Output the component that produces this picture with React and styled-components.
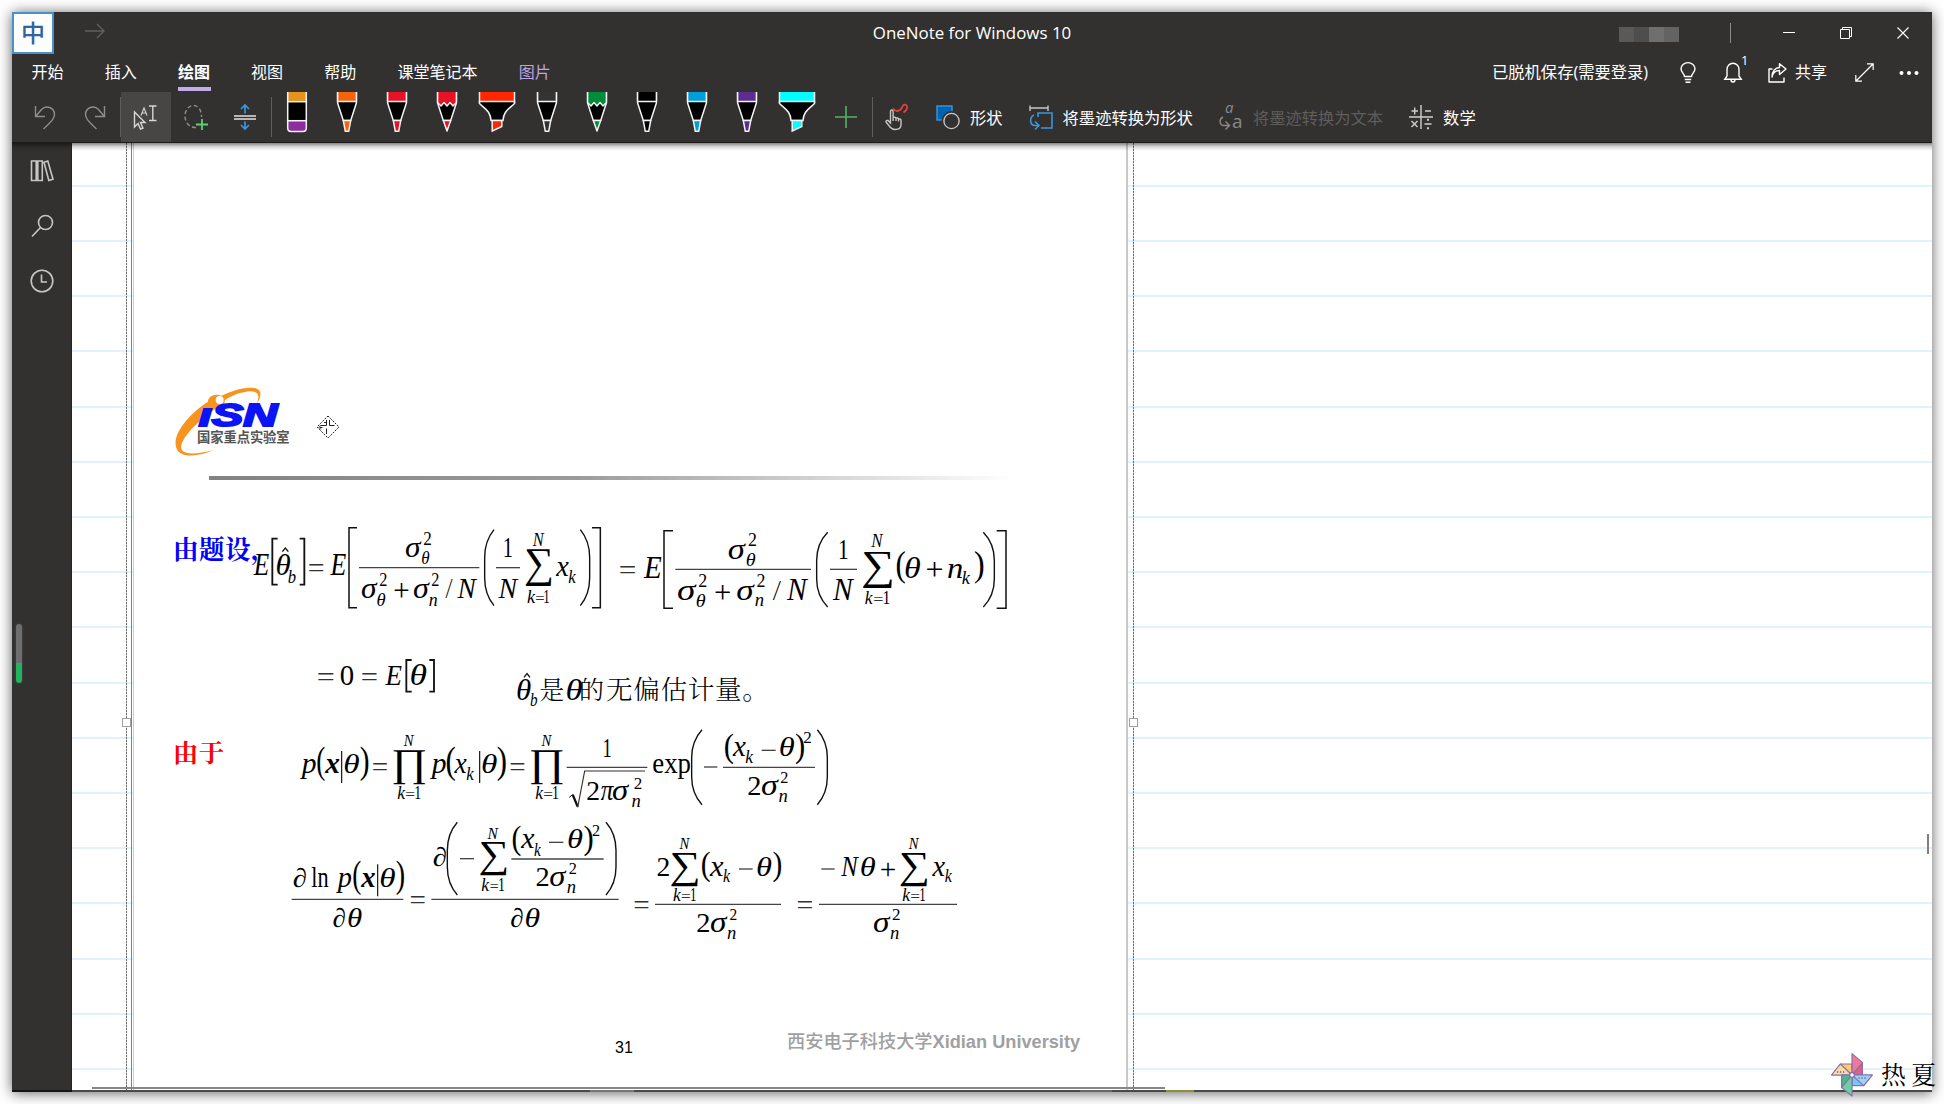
import React from "react";
import styled, { createGlobalStyle, css } from "styled-components";

const Global = createGlobalStyle`
  * { box-sizing: border-box; }
  html, body { margin: 0; padding: 0; background: #fff; overflow: hidden; }
  body { font-family: "Open Sans", "Noto Sans CJK SC", sans-serif; }
  svg { display: block; overflow: visible; }
`;

const Desktop = styled.main`
  width: 1944px;
  height: 1104px;
  padding: 12px;
  position: relative;
  background: #fff;
`;
const Window = styled.div`
  width: 1920px;
  height: 1080px;
  display: flex;
  flex-direction: column;
  background: #fff;
  box-shadow: 0 1px 13px rgba(0, 0, 0, 0.62);
`;

/* ---------- header ---------- */
const Header = styled.header`
  height: 131px;
  flex: none;
  display: flex;
  flex-direction: column;
  background: #323130;
  color: #fff;
  border-bottom: 1px solid #1c1b1a;
  position: relative;
  z-index: 2;
`;
const TitleBar = styled.div`
  height: 42px;
  display: grid;
  grid-template-columns: 1fr auto 1fr;
  align-items: center;
`;
const TitleLeft = styled.div`
  display: flex;
  align-items: center;
  gap: 31px;
`;
const ImeBadge = styled.div`
  width: 42px;
  height: 42px;
  border: 2px solid #4b8fcc;
  background: #fdfdfd;
  color: #2f659c;
  font: 500 24px/36px "Noto Sans CJK SC", sans-serif;
  text-align: center;
`;
const Title = styled.h1`
  margin: 0;
  font-weight: 400;
  font-size: 16.9px;
  line-height: 24px;
  white-space: nowrap;
`;
const TitleRight = styled.div`
  display: flex;
  justify-content: flex-end;
  align-items: center;
  height: 42px;
`;
const Mosaic = styled.div`
  display: flex;
  width: 60px;
  height: 15px;
  margin: 3px 51px 0 0;
`;
const Tile = styled.span`
  flex: 1;
  background: ${(p) => p.$tone};
`;
const TitleRule = styled.span`
  width: 1px;
  height: 20px;
  background: #8b8a89;
`;
const CaptionButton = styled.span`
  width: 57px;
  height: 40px;
  display: flex;
  align-items: center;
  justify-content: center;
`;
const CaptionGroup = styled.div`
  display: flex;
  padding: 0 1px 0 29px;
`;

const TabRow = styled.nav`
  height: 38px;
  display: flex;
  justify-content: space-between;
  padding: 0 13px 0 19.5px;
  font-size: 16px;
  line-height: 37px;
`;
const Tabs = styled.div`
  display: flex;
  gap: 41.2px;
`;
const Tab = styled.span`
  position: relative;
  height: 38px;
  white-space: nowrap;
  color: ${(p) => (p.$accent ? "#bea3e6" : "#fff")};
  ${(p) =>
    p.$active &&
    css`
      font-weight: 700;
      &::after {
        content: "";
        position: absolute;
        left: 0;
        right: -1px;
        top: 33px;
        height: 4px;
        background: #c3abe9;
      }
    `}
`;
const Status = styled.div`
  display: flex;
  align-items: center;
  height: 37px;
`;
const SyncText = styled.span`
  font-size: 16.3px;
  width: 157px;
  white-space: nowrap;
`;
const IconSlot = styled.span`
  display: flex;
  margin-left: ${(p) => p.$ml}px;
  position: relative;
`;
const Count = styled.sup`
  position: absolute;
  left: 17px;
  top: -9px;
  font-size: 13px;
  line-height: 14px;
`;
const ShareText = styled.span`
  margin-left: 8px;
  width: 32px;
`;

const Tools = styled.div`
  height: 50px;
  display: flex;
  padding-left: 8px;
`;
const Cell = styled.div`
  width: 50px;
  height: 50px;
  display: flex;
  align-items: ${(p) => (p.$top ? "flex-start" : "center")};
  justify-content: center;
  padding-right: ${(p) => (p.$tight ? 2 : 0)}px;
  background: ${(p) => (p.$on ? "#484644" : "transparent")};
`;
const Divider = styled.span`
  width: 1px;
  height: 40px;
  margin-top: 5px;
  background: #605e5c;
`;
const Command = styled.div`
  display: flex;
  align-items: center;
  gap: 10px;
  margin-left: ${(p) => p.$ml}px;
  font-size: 16.3px;
  white-space: nowrap;
  color: ${(p) => (p.$off ? "#5f5e5c" : "#fff")};
  svg { flex: none; }
`;
const Label = styled.span`
  display: block;
`;

/* ---------- body ---------- */
const Body = styled.div`
  flex: 1;
  min-height: 0;
  display: flex;
  position: relative;
`;
const HeaderShade = styled.div`
  position: absolute;
  inset: 0 0 auto 0;
  height: 8px;
  z-index: 3;
  background: linear-gradient(rgba(0, 0, 0, 0.48), rgba(0, 0, 0, 0.14) 50%, transparent);
`;
const Sidebar = styled.aside`
  width: 60px;
  flex: none;
  display: flex;
  flex-direction: column;
  align-items: center;
  padding: 16px 0 0 1px;
  gap: 31px;
  background: #323130;
  border-right: 1px solid #252423;
  position: relative;
`;
const Meter = styled.div`
  position: absolute;
  left: 4px;
  top: 481px;
  width: 6px;
  height: 59px;
  border-radius: 3px;
  background: linear-gradient(#6f6e6e 39px, #22b45c 39px);
  box-shadow: 0 0 3px #4a4a4c;
`;
const Canvas = styled.section`
  flex: 1;
  position: relative;
  overflow: hidden;
  background: #fff;
`;
const Ruling = styled.div`
  display: flex;
  flex-direction: column;
`;
const RuleRow = styled.div`
  flex: none;
  height: ${(p) => p.$h}px;
  border-bottom: 2px solid #e1f2ff;
`;
const MarginLine = styled.div`
  position: absolute;
  left: 59px;
  top: 0;
  bottom: 0;
  width: 1px;
  background: #f0524c;
  z-index: 2;
`;
const Slide = styled.article`
  position: absolute;
  left: 61px;
  top: 0;
  width: 995px;
  bottom: 0;
  background: #fff;
  border-left: 1px solid #cfcfcf;
  border-right: 2px solid #c8c8c8;
`;
const Selection = styled.div`
  position: absolute;
  left: ${(p) => p.$x}px;
  top: 0;
  bottom: 0;
  width: 1px;
  background: repeating-linear-gradient(#6e6e6e 0 2px, #d8d8d8 2px 3px);
`;
const Handle = styled.span`
  position: absolute;
  left: -4px;
  top: 575px;
  width: 9px;
  height: 9px;
  background: #fff;
  border: 1px solid #a0a0a0;
`;
const Figure = styled.svg`
  position: absolute;
  left: ${(p) => p.$x}px;
  top: ${(p) => p.$y}px;
`;
const SlideRule = styled.div`
  position: absolute;
  left: 75px;
  top: 333px;
  width: 805px;
  height: 4px;
  background: linear-gradient(90deg, #828282, #9a9a9a 45%, #fff);
`;
const PageNo = styled.span`
  position: absolute;
  left: 481px;
  top: 895px;
  font: 16px/20px "Liberation Sans", sans-serif;
  color: #000;
`;
const Footer = styled.span`
  position: absolute;
  left: 653px;
  top: 886px;
  font: 700 18.2px/26px "Liberation Sans", "Noto Sans CJK SC", sans-serif;
  color: #a0a0a0;
  white-space: nowrap;
`;
const FooterHan = styled.span`
  font-weight: 500;
`;
const VThumb = styled.div`
  position: absolute;
  right: 3px;
  top: 691px;
  width: 2px;
  height: 20px;
  background: #808080;
`;
const HThumb = styled.div`
  position: absolute;
  left: 20px;
  bottom: 3px;
  width: 1073px;
  height: 2px;
  background: #868686;
`;
const BottomEdge = styled.div`
  position: absolute;
  inset: auto 0 0 0;
  height: 2px;
  z-index: 4;
  background: linear-gradient(
    90deg,
    #141414 60px,
    #4a4a48 60px 578px,
    #777 578px 622px,
    #4a4a48 622px 1068px,
    #686868 1068px 1100px,
    #4a4a48 1100px 1154px,
    #8f8c3c 1154px 1182px,
    #4a4a48 1182px
  );
`;
const Watermark = styled.div`
  position: absolute;
  right: 8px;
  bottom: 7px;
  display: flex;
  align-items: center;
  gap: 8px;
  z-index: 5;
`;
const WatermarkText = styled.span`
  font: 400 25px/30px "AR PL UKai CN", "Noto Serif CJK SC", "Noto Sans CJK SC", serif;
  letter-spacing: 5px;
  margin: -4px -5px 0 0;
  color: #000;
`;

/* ---------- toolbar pens ---------- */
const Pen = ({ color, kind = "pen" }) => {
  if (kind === "eraser")
    return (
      <svg width="22" height="42" viewBox="0 0 22 42" stroke="#f4f4f4" strokeWidth="1.5">
        <rect x="1.7" y="0" width="18.6" height="9.7" fill="#e3931e" stroke="none" />
        <path d="M1.7 0V9.7M20.3 0V9.7" />
        <rect x="1.7" y="9.7" width="18.6" height="19" fill="#000" />
        <path d="M1.7 28.7H20.3V36Q20.3 39.5 17 39.5H5Q1.7 39.5 1.7 36Z" fill="#8f2da0" />
      </svg>
    );
  if (kind === "marker")
    return (
      <svg width="38" height="42" viewBox="0 0 38 42" stroke="#f4f4f4" strokeWidth="1.5">
        <path d="M1.5 0V10H36.5V0" fill={color} />
        <path d="M1.5 9.5H36.5V11.5C31 17 25.5 19 25 28.5H13C12.5 19 7 17 1.5 11.5Z" fill="#000" />
        <path d="M14.2 28.5H23.8V34.5L14.2 39Z" fill={color} />
      </svg>
    );
  const pencil = kind === "pencil";
  return (
    <svg width="22" height="42" viewBox="0 0 22 42" stroke="#f4f4f4" strokeWidth="1.5" strokeLinejoin="round">
      <path d="M1.6 0V11L7.3 28.5H14.7L20.4 11V0" fill="#000" />
      {pencil ? (
        <path d="M1.6 0V10.5L5 14L8 10.5L11 14L14 10.5L17 14L20.4 10.5V0" fill={color} />
      ) : (
        <path d="M1.6 0V9.5H20.4V0" fill={color} />
      )}
      {pencil ? (
        <path d="M7.3 28.5H14.7L11 39Z" fill={color} />
      ) : (
        <path d="M7.3 28.5H14.7L12.7 39.3H9.3Z" fill={color} />
      )}
    </svg>
  );
};

const PENS = [
  ["eraser", "#e3931e"],
  ["pen", "#f7630c"],
  ["pen", "#e81224"],
  ["pencil", "#e81224"],
  ["marker", "#ff2600"],
  ["pen", "#333333"],
  ["pencil", "#008c3a"],
  ["pen", "#000000"],
  ["pen", "#009fda"],
  ["pen", "#5c2d91"],
  ["marker", "#00ffff"],
];

const Ico = ({ w = 24, h = 24, c = "#c8c6c4", sw = 1.4, children, ...r }) => (
  <svg width={w} height={h} viewBox={`0 0 ${w} ${h}`} fill="none" stroke={c} strokeWidth={sw} {...r}>
    {children}
  </svg>
);

/* ---------- formula glyphs ---------- */
const UPRIGHT = "012()=+∑∏";
const F = 100;
const MATH = '"Liberation Serif", "Times New Roman", serif';

/* ink box of a symbol at size F: left, bottom, right, top */
const pen = document.createElement("canvas").getContext("2d");
const boxes = {};
const inkBox = (c, bold) => {
  const key = c + (bold ? "b" : "");
  if (!boxes[key]) {
    pen.font = `${UPRIGHT.includes(c) ? "" : "italic "}${bold ? "bold " : ""}${F}px ${MATH}`;
    const m = pen.measureText(c);
    boxes[key] = [
      -m.actualBoundingBoxLeft,
      -m.actualBoundingBoxDescent,
      m.actualBoundingBoxRight,
      m.actualBoundingBoxAscent,
    ];
  }
  return boxes[key];
};

/* a symbol whose ink runs from x1 to x2 and stands on a baseline */
const S = ({ c, x1, x2, y, s, bold }) => {
  const [l, , r] = inkBox(c, bold);
  const k = (x2 - x1) / (r - l);
  return (
    <text
      transform={`translate(${x1 - l * k} ${y}) scale(${k} ${s / F})`}
      fontFamily={MATH}
      fontSize={F}
      fontStyle={UPRIGHT.includes(c) ? "normal" : "italic"}
      fontWeight={bold ? 700 : 400}
    >
      {c}
    </text>
  );
};
/* a symbol stretched to fill a box */
const B = ({ c, x1, x2, y1, y2 }) => {
  const [l, b, r, t] = inkBox(c);
  const kx = (x2 - x1) / (r - l);
  const ky = (y2 - y1) / (t - b);
  return (
    <text
      transform={`translate(${x1 - l * kx} ${y1 + t * ky}) scale(${kx} ${ky})`}
      fontFamily={MATH}
      fontSize={F}
      fill={c === "=" ? "#333" : "#000"}
    >
      {c}
    </text>
  );
};
const Row = ({ syms = [], boxes: stretched = [], bars = [], dx = 0 }) => (
  <g transform={`translate(${dx} 0)`}>
    {syms.map(([c, x1, x2, y, s, bold], i) => (
      <S key={i} c={c} x1={x1} x2={x2} y={y} s={s} bold={bold} />
    ))}
    {stretched.map(([c, x1, x2, y1, y2], i) => (
      <B key={i} c={c} x1={x1} x2={x2} y1={y1} y2={y2} />
    ))}
    {bars.map(([x1, x2, y], i) => (
      <path key={i} d={`M${x1} ${y}H${x2}`} stroke="#444" strokeWidth="4" />
    ))}
  </g>
);
const Square = ({ x1, x2, y1, y2, right, w = 4.5 }) => (
  <path
    d={right ? `M${x1} ${y1}H${x2}V${y2}H${x1}` : `M${x2} ${y1}H${x1}V${y2}H${x2}`}
    fill="none"
    stroke="#111"
    strokeWidth={w}
  />
);
/* tall round delimiter: from its tips at x1 to its straight side at x2 */
const Round = ({ x1, x2, y1, y2 }) => {
  const d = (x2 - x1) * 0.7;
  return (
    <path
      d={`M${x1} ${y1}C${x1 + d} ${y1 + 24} ${x2} ${y1 + 50} ${x2} ${y1 + 84}V${y2 - 84}C${x2} ${y2 - 50} ${x1 + d} ${y2 - 24} ${x1} ${y2}`}
      fill="none"
      stroke="#111"
      strokeWidth="4.2"
    />
  );
};
const Hat = ({ x, y }) => (
  <path d={`M${x - 9} ${y + 12}L${x} ${y + 1}L${x + 9} ${y + 12}`} fill="none" stroke="#111" strokeWidth="4" />
);
const Bar = ({ x, y1, y2 }) => <path d={`M${x} ${y1}V${y2}`} stroke="#111" strokeWidth="3.5" />;
const Han = ({ x, y, s, w, fill = "#000", bold, children }) => (
  <text
    x={x}
    y={y}
    fontSize={s}
    textLength={w}
    fill={fill}
    fontWeight={bold ? 700 : 300}
    fontFamily='"Noto Serif CJK SC", "Noto Sans CJK SC", serif'
  >
    {children}
  </text>
);

const EqMean = () => (
  <Figure $x={16} $y={357} width="480" height="220" viewBox="0 0 1440 660">
    <Han x={69} y={177} s={77} w={233} fill="#0000ff" bold>由题设</Han>
    <Han x={302} y={177} s={77} fill="#0000ff" bold>，</Han>
    <Square x1={367} x2={383} y1={116} y2={254} w={5.5} />
    <Square x1={449} x2={463} y1={116} y2={254} w={5.5} right />
    <Square x1={597} x2={621} y1={83} y2={323} />
    <Square x1={1326} x2={1351} y1={83} y2={323} right />
    <Round x1={1032} x2={1004} y1={89} y2={317} />
    <Round x1={1291} x2={1319} y1={89} y2={317} />
    <Hat x={406} y={143} />
    <Row
      syms={[
        ["E", 310, 357, 226, 92], ["θ", 380, 420, 226, 88], ["b", 415, 437, 248, 58],
        ["E", 540, 588, 226, 92], ["σ", 767, 815, 172, 90], ["2", 822, 843, 134, 56],
        ["θ", 816, 838, 192, 56], ["σ", 635, 683, 294, 90], ["2", 690, 710, 258, 56],
        ["θ", 682, 706, 317, 56], ["σ", 791, 840, 294, 90], ["2", 846, 866, 258, 56],
        ["n", 838, 861, 317, 58], ["/", 886, 908, 294, 90], ["N", 922, 982, 294, 90],
        ["1", 1063, 1085, 171, 90], ["N", 1045, 1106, 294, 90], ["N", 1148, 1184, 137, 56],
        ["k", 1132, 1156, 309, 56], ["1", 1183, 1197, 309, 56], ["x", 1217, 1256, 227, 90],
        ["k", 1256, 1278, 248, 56],
      ]}
      boxes={[
        ["=", 477, 520, 195, 215], ["+", 733, 775, 250, 294],
        ["∑", 1127, 1204, 147, 259], ["=", 1158, 1182, 287, 300],
      ]}
      bars={[[627, 988, 203], [1038, 1110, 203]]}
    />
    <Square x1={769} x2={785} y1={480} y2={575} w={5.5} />
    <Square x1={838} x2={852} y1={480} y2={575} w={5.5} right />
    <Hat x={1131} y={520} />
    <Row
      syms={[
        ["0", 572, 610, 556, 90], ["E", 705, 755, 556, 90], ["θ", 783, 829, 556, 88],
        ["θ", 1102, 1142, 600, 88], ["b", 1141, 1161, 618, 58], ["θ", 1251, 1296, 600, 88],
      ]}
      boxes={[["=", 504, 550, 522, 542], ["=", 636, 680, 522, 542]]}
    />
    <Han x={1168} y={597} s={75}>是</Han>
    <Han x={1287} y={597} s={75}>的</Han>
    <Han x={1368} y={597} s={80} w={489}>无偏估计量。</Han>
  </Figure>
);

const EqMean2 = () => (
  <Figure $x={466} $y={357} width="480" height="120" viewBox="0 0 1440 360">
    <Square x1={192} x2={219} y1={92} y2={325} />
    <Square x1={1190} x2={1218} y1={92} y2={325} right />
    <Round x1={683} x2={650} y1={97} y2={321} />
    <Round x1={1150} x2={1183} y1={97} y2={321} />
    <Row
      syms={[
        ["E", 130, 184, 233, 92], ["σ", 385, 438, 178, 90], ["2", 446, 468, 138, 56],
        ["θ", 440, 466, 198, 56], ["σ", 233, 290, 299, 90], ["2", 297, 319, 260, 56],
        ["θ", 290, 316, 320, 56], ["σ", 411, 465, 299, 90], ["2", 472, 494, 260, 56],
        ["n", 466, 490, 319, 58], ["/", 518, 543, 299, 90], ["N", 560, 625, 299, 92],
        ["1", 719, 742, 178, 90], ["N", 698, 763, 299, 92], ["N", 813, 850, 142, 55],
        ["k", 795, 818, 313, 56], ["1", 851, 868, 313, 56], ["θ", 916, 960, 233, 88],
        ["n", 1044, 1086, 233, 90], ["k", 1086, 1110, 251, 56],
      ]}
      boxes={[
        ["=", 60, 105, 199, 219], ["+", 346, 390, 255, 299],
        ["∑", 789, 876, 153, 263], ["=", 822, 848, 292, 305], ["(", 890, 915, 152, 253],
        ["+", 980, 1026, 187, 231], [")", 1125, 1150, 152, 253],
      ]}
      bars={[[226, 633, 208], [690, 771, 208]]}
    />
  </Figure>
);

const EqLikelihood = () => (
  <Figure $x={16} $y={567} width="920" height="240" viewBox="0 0 2760 720">
    <Han x={69} y={157} s={76} w={153} fill="#ff0000" bold>由于</Han>
    <Bar x={575} y1={123} y2={219} />
    <Bar x={989} y1={123} y2={219} />
    <Bar x={683} y1={463} y2={559} />
    <Round x1={1656} x2={1625} y1={59} y2={284} />
    <Round x1={2002} x2={2032} y1={59} y2={284} />
    <Round x1={922} x2={892} y1={337} y2={555} />
    <Round x1={1368} x2={1398} y1={337} y2={555} />
    <Row
      syms={[
        ["p", 450, 497, 190, 90], ["x", 524, 568, 190, 90, true], ["θ", 584, 627, 190, 84],
        ["N", 761, 793, 108, 52], ["k", 743, 766, 268, 54], ["1", 796, 811, 268, 54],
        ["p", 840, 887, 190, 90], ["x", 912, 950, 190, 90], ["k", 950, 972, 210, 56],
        ["θ", 997, 1040, 190, 84], ["N", 1174, 1206, 108, 52], ["k", 1157, 1180, 268, 54],
        ["1", 1209, 1224, 268, 54],
      ]}
      boxes={[
        ["(", 502, 524, 110, 215], [")", 632, 655, 110, 215], ["=", 669, 711, 160, 181],
        ["∏", 730, 825, 120, 223], ["=", 768, 793, 247, 260], ["(", 890, 915, 110, 215],
        [")", 1043, 1067, 110, 215], ["=", 1081, 1123, 160, 181], ["∏", 1143, 1238, 120, 223],
        ["=", 1182, 1207, 247, 260],
      ]}
      bars={[[1250, 1492, 172]]}
    />
    <path d="M1258 262L1268 254" stroke="#111" strokeWidth="3" fill="none" />
    <path d="M1268 254L1283 290" stroke="#111" strokeWidth="7" fill="none" />
    <path d="M1283 292L1304 183H1485" stroke="#333" strokeWidth="3.5" fill="none" />
    <text x="1507" y="190" fontFamily={MATH} fontSize="86" textLength="116" lengthAdjust="spacingAndGlyphs">exp</text>
    <Row
      dx={1290}
      syms={[
        ["1", 72, 92, 142, 84], ["2", 22, 56, 270, 84], ["π", 62, 102, 270, 86], ["σ", 98, 148, 270, 86],
        ["2", 163, 184, 236, 50], ["n", 156, 180, 290, 56], ["x", 457, 497, 138, 90],
        ["k", 497, 520, 159, 56], ["θ", 600, 642, 138, 84], ["2", 672, 693, 100, 50],
        ["2", 505, 540, 255, 82], ["σ", 545, 597, 255, 86], ["2", 603, 623, 219, 50],
        ["n", 597, 621, 275, 56],
      ]}
      boxes={[["(", 435, 460, 68, 162], [")", 648, 672, 68, 162]]}
      bars={[[372, 412, 171], [429, 705, 172], [545, 587, 121]]}
    />
    <text x="484" y="530" fontFamily={MATH} fontSize="88" textLength="52" lengthAdjust="spacingAndGlyphs">ln</text>
    <Row
      syms={[
        ["∂", 431, 468, 530, 80], ["p", 558, 603, 530, 90], ["x", 632, 675, 530, 90, true],
        ["θ", 692, 735, 530, 84], ["∂", 550, 585, 652, 80], ["θ", 595, 635, 652, 84],
        ["∂", 851, 888, 468, 80], ["N", 1012, 1046, 388, 52], ["k", 995, 1018, 543, 54],
        ["1", 1047, 1062, 543, 54], ["x", 1112, 1153, 414, 90], ["k", 1153, 1173, 437, 54],
        ["θ", 1255, 1297, 414, 84], ["2", 1328, 1348, 378, 50], ["2", 1160, 1195, 528, 82],
        ["σ", 1200, 1250, 528, 86], ["2", 1258, 1278, 492, 50], ["n", 1252, 1276, 548, 56],
        ["∂", 1083, 1118, 652, 80], ["θ", 1127, 1168, 652, 84],
      ]}
      boxes={[
        ["(", 610, 632, 452, 557], [")", 740, 762, 452, 557], ["=", 782, 824, 557, 578],
        ["∑", 990, 1069, 396, 497], ["=", 1021, 1044, 521, 534],
        ["(", 1088, 1112, 345, 438], [")", 1303, 1327, 345, 438],
      ]}
      bars={[[425, 760, 568], [930, 972, 446], [1197, 1240, 397], [1084, 1361, 447], [844, 1406, 568]]}
    />
    <Row
      dx={1290}
      syms={[
        ["2", 233, 267, 498, 82], ["N", 298, 330, 418, 52], ["k", 280, 303, 573, 54],
        ["1", 333, 347, 573, 54], ["x", 388, 430, 498, 90], ["k", 430, 451, 517, 54],
        ["θ", 532, 574, 498, 84], ["2", 352, 387, 666, 82], ["σ", 392, 443, 666, 86],
        ["2", 450, 469, 630, 50], ["n", 443, 467, 686, 56], ["N", 783, 837, 498, 88],
        ["θ", 843, 885, 498, 84], ["N", 986, 1018, 418, 52], ["k", 968, 991, 573, 54],
        ["1", 1021, 1035, 573, 54], ["x", 1056, 1095, 498, 90], ["k", 1095, 1116, 517, 54],
        ["σ", 881, 932, 666, 86], ["2", 938, 959, 630, 50], ["n", 932, 956, 686, 56],
      ]}
      boxes={[
        ["=", 163, 205, 572, 593], ["∑", 273, 353, 427, 528], ["=", 305, 330, 551, 564],
        ["(", 366, 390, 425, 518], [")", 580, 603, 425, 518], ["=", 653, 696, 572, 593],
        ["+", 903, 945, 456, 498], ["∑", 961, 1041, 427, 528], ["=", 993, 1018, 551, 564],
      ]}
      bars={[[477, 518, 477], [225, 603, 583], [724, 764, 477], [717, 1131, 583]]}
    />
  </Figure>
);

const IsnLogo = () => (
  <Figure $x={36} $y={240} width="124" height="76" viewBox="510 760 372 228">
    <path
      d="M640 961C604 978 552 986 534 964C508 928 554 862 624 816C624 800 644 790 664 798C690 786 732 770 764 775C788 780 784 804 770 822C780 798 776 786 752 785C724 786 694 798 674 812C676 828 660 836 650 834C596 872 530 934 546 962C560 978 600 972 640 961Z"
      fill="#f7941d"
    />
    <circle cx="659" cy="811" r="12" fill="#fff" />
    <text x="596" y="889" fontFamily='"Liberation Sans", sans-serif' fontSize="94" fontWeight="700" fontStyle="italic" fill="#0a14f5" stroke="#0a14f5" strokeWidth="6" textLength="236" lengthAdjust="spacingAndGlyphs">ıSN</text>
    <text x="591" y="936" fontFamily='"Noto Sans CJK SC", sans-serif' fontSize="40" fontWeight="700" fill="#555" textLength="278">国家重点实验室</text>
  </Figure>
);

const MoveCursor = () => (
  <Figure $x={182} $y={272} width="24" height="24" viewBox="0 0 24 24">
    <path d="M12 1L23 12L12 23L1 12Z" fill="#fff" stroke="#222" strokeWidth="1" strokeDasharray="2 1.2" />
    <path d="M10.5 5V10.5H4.5M13.5 5V10.5H18.5M10.5 19V13.5M4 12.5H6.5M4.5 10.5L3 12.5L5 14.5M8 7.5H10" fill="none" stroke="#222" strokeWidth="1" />
  </Figure>
);

const Pinwheel = () => (
  <svg width="42" height="44" viewBox="0 0 126 132" stroke="#8a6fa8" strokeWidth="3.5" strokeLinejoin="round">
    <path d="M63 66V2L94 28V66Z" fill="#f0799b" />
    <path d="M63 66L94 30V66Z" fill="#e0607f" />
    <path d="M63 66H2L28 33H62Z" fill="#fbcb74" />
    <path d="M63 66H2L28 33Z" fill="#fbdca0" />
    <path d="M63 66H124L98 98H64Z" fill="#7cc4f5" />
    <path d="M63 66H124L98 98Z" fill="#9bd4fb" />
    <path d="M63 66V129L32 104V66Z" fill="#6bcfa8" />
    <path d="M63 66L32 104V66Z" fill="#52b391" />
    <path d="M20 54V60M29 54V60M38 54V60M84 72V78M93 72V78M102 72V78" />
    <circle cx="63" cy="66" r="7" fill="#fff" />
  </svg>
);

const RULES = [44, 55, 55, 55, 56, 55, 55, 55, 55, 56, 55, 55, 55, 55, 56, 55, 55];

export default function App() {
  return (
    <Desktop>
      <Global />
      <Window>
        <Header>
          <TitleBar>
            <TitleLeft>
              <ImeBadge>中</ImeBadge>
              <Ico w={20} h={16} c="#605f5d">
                <path d="M0 6H19M12 -1L19 6L12 13" />
              </Ico>
            </TitleLeft>
            <Title>OneNote for Windows 10</Title>
            <TitleRight>
              <Mosaic>
                {["#595959", "#4e4e4e", "#6f6f6f", "#636363"].map((t) => (
                  <Tile key={t} $tone={t} />
                ))}
              </Mosaic>
              <TitleRule />
              <CaptionGroup>
                <CaptionButton>
                  <Ico w={12} h={12} c="#fff" sw={1}><path d="M0 5.5H12" /></Ico>
                </CaptionButton>
                <CaptionButton>
                  <Ico w={12} h={12} c="#fff" sw={1}>
                    <path d="M.5 2.5H9.5V11.5H.5ZM2.5 2.5V.5H11.5V9.5H9.5" />
                  </Ico>
                </CaptionButton>
                <CaptionButton>
                  <Ico w={12} h={12} c="#fff" sw={1.1}><path d="M.5 .5L11.5 11.5M11.5 .5L.5 11.5" /></Ico>
                </CaptionButton>
              </CaptionGroup>
            </TitleRight>
          </TitleBar>

          <TabRow>
            <Tabs>
              <Tab>开始</Tab>
              <Tab>插入</Tab>
              <Tab $active>绘图</Tab>
              <Tab>视图</Tab>
              <Tab>帮助</Tab>
              <Tab>课堂笔记本</Tab>
              <Tab $accent>图片</Tab>
            </Tabs>
            <Status>
              <SyncText>已脱机保存(需要登录)</SyncText>
              <IconSlot $ml={31}>
                <Ico w={16} h={22} c="#fff">
                  <path d="M4.5 14.5C4.5 11.5 1 10.5 1 6.8A6.8 6 0 0 1 15 6.8C15 10.5 11.5 11.5 11.5 14.5ZM4.8 17.5H11.2M5.5 20.3H10.5" />
                </Ico>
              </IconSlot>
              <IconSlot $ml={28}>
                <Ico w={18} h={22} c="#fff">
                  <path d="M.8 17.3H17.2L15 14V7.5A6 6.3 0 0 0 3 7.5V14ZM7 17.5A2 2.5 0 0 0 11 17.5" />
                </Ico>
                <Count>1</Count>
              </IconSlot>
              <IconSlot $ml={26}>
                <Ico w={19} h={20} c="#fff">
                  <path d="M4.5 6H1V19H16V14.5M4 14C5 9 8 7.5 11.5 7.5V11.5L18 6L11.5 .8V4.5C7.5 4.5 4 8 4 14Z" strokeLinejoin="round" />
                </Ico>
              </IconSlot>
              <ShareText>共享</ShareText>
              <IconSlot $ml={28}>
                <Ico w={19} h={19} c="#fff" sw={1.2}>
                  <path d="M1 18L18 1M12 .8H18.2V7M.8 12V18.2H7" />
                </Ico>
              </IconSlot>
              <IconSlot $ml={25}>
                <Ico w={20} h={6} c="none">
                  <g fill="#fff"><circle cx="2.5" cy="3" r="2" /><circle cx="10" cy="3" r="2" /><circle cx="17.5" cy="3" r="2" /></g>
                </Ico>
              </IconSlot>
            </Status>
          </TabRow>

          <Tools>
            <Cell>
              <Ico w={24} h={26} c="#8f8e8c">
                <path d="M2.5 2V12.5H12M3 12L8.5 5.5C13 0.5 21.5 3.5 21.5 10.5C21.5 14 19.5 16.5 10.5 25" />
              </Ico>
            </Cell>
            <Cell>
              <Ico w={24} h={26} c="#8f8e8c">
                <path d="M21.5 2V12.5H12M21 12L15.5 5.5C11 0.5 2.5 3.5 2.5 10.5C2.5 14 4.5 16.5 13.5 25" />
              </Ico>
            </Cell>
            <Divider />
            <Cell $on $tight>
              <Ico w={26} h={26} c="#d8d6d4">
                <path d="M2.5 8V23L6 19.5L8.5 25L11 24L8.5 18.5H13Z" />
                <path d="M17 2H24.5M20.8 2V16.5M17 16.5H24.5" />
                <path d="M9 11.5L12 4L15 11.5M10 9H14" strokeWidth="1.1" />
              </Ico>
            </Cell>
            <Cell>
              <Ico w={26} h={28} c="#8f8e8c">
                <path d="M13 24.5C6 25 2 19 2 13C2 7 6 2.5 10.5 2.5C15.5 2.5 18.5 7 18.5 14" strokeDasharray="4 2.6" />
                <path d="M19 16V27M13 21.5H25" stroke="#5fd06f" strokeWidth="1.8" />
              </Ico>
            </Cell>
            <Cell $tight>
              <Ico w={24} h={28} c="#b8b6b4">
                <path d="M1 13H23M1 16H23" strokeWidth="1.8" />
                <path d="M12 10.5V2M8 6L12 2L16 6M12 18.5V25.5M8 22L12 26L16 22" stroke="#3a96dd" strokeWidth="1.7" />
              </Ico>
            </Cell>
            <Divider />
            {PENS.map(([kind, color], i) => (
              <Cell key={i} $top>
                <Pen kind={kind} color={color} />
              </Cell>
            ))}
            <Cell $tight>
              <Ico w={22} h={22} c="#4fb563" sw={1.6}><path d="M11 0V22M0 11H22" /></Ico>
            </Cell>
            <Divider />
            <Cell $tight>
              <Ico w={26} h={28} c="#c8c6c4">
                <path d="M6.5 17V8.5Q6.5 7 7.8 7T9.1 8.5V14.5Q11.5 13.6 12 15.2Q14 14.4 14.5 16Q17 15.6 17 17.5V21.5Q17 26.5 11.5 26.5Q8 26.5 6 24L2 19Q2 17 4 17.5L6.5 20V17M12 15.2V18M14.5 16V18.5M9.1 14.5V18" />
                <path d="M9 5.5C12 9.5 14.5 8 16.5 6.5C19.5 4 18 2.5 20 1.8C23.5 1 25 6 19.5 9.5" stroke="#e8413f" strokeWidth="1.7" />
              </Ico>
            </Cell>
            <Command $ml={13}>
              <Ico w={24} h={26}>
                <rect x="1" y="2" width="15" height="14" fill="#0063b1" stroke="#3a96dd" />
                <circle cx="15.5" cy="17" r="8.5" fill="#323130" stroke="#323130" strokeWidth="3" />
                <circle cx="15.5" cy="17" r="7.6" />
              </Ico>
              <Label>形状</Label>
            </Command>
            <Command $ml={26}>
              <Ico w={24} h={26}>
                <path d="M1 1.5V7M19 1.5V7M1 4H19" />
                <path d="M12 24H23V9H9V13M5 11C1 12.5 0 20 5 21.5H9M6 17.5L10 21.5L6 25.5" stroke="#3a96dd" strokeWidth="1.6" />
              </Ico>
              <Label>将墨迹转换为形状</Label>
            </Command>
            <Command $ml={26} $off>
              <Ico w={24} h={26} c="#8a8987">
                <path d="M4 13C0 15 0 21 4.5 21.5H10M6.5 17.5L10.5 21.5L6.5 25.5" />
                <text x="6" y="9" fill="#8a8987" stroke="none" fontSize="15" fontStyle="italic" fontFamily="Open Sans">a</text>
                <text x="13" y="24" fill="#8a8987" stroke="none" fontSize="19" fontFamily="Open Sans">a</text>
              </Ico>
              <Label>将墨迹转换为文本</Label>
            </Command>
            <Command $ml={26}>
              <Ico w={24} h={26} c="#d0cecc">
                <path d="M12 1V25M0 13H24M2.5 7H9M5.7 3.5V10.5M16 7H22M2.5 17L8.5 23M8.5 17L2.5 23M15.5 20H22.5" />
                <path d="M18 15.8H20M18 24.2H20" strokeWidth="2" />
              </Ico>
              <Label>数学</Label>
            </Command>
          </Tools>
        </Header>

        <Body>
          <HeaderShade />
          <Sidebar>
            <Ico w={24} h={24} sw={1.6}>
              <path d="M1.5 2H6.2V21.5H1.5ZM7.8 2H12.3V21.5H7.8ZM14 3.2L17.8 2L23 20.2L18.8 21.5Z" />
            </Ico>
            <Ico w={24} h={24} sw={1.6}>
              <circle cx="15.5" cy="8.5" r="7" />
              <path d="M10.5 13.5L2 22.5" />
            </Ico>
            <Ico w={24} h={24} sw={1.6}>
              <circle cx="12" cy="12" r="10.8" />
              <path d="M11.5 5.5V13H17" />
            </Ico>
            <Meter />
          </Sidebar>
          <Canvas>
            <Ruling>
              {RULES.map((h, i) => (
                <RuleRow key={i} $h={h} />
              ))}
            </Ruling>
            <Slide>
              <IsnLogo />
              <MoveCursor />
              <SlideRule />
              <EqMean />
              <EqMean2 />
              <EqLikelihood />
              <PageNo>31</PageNo>
              <Footer>
                <FooterHan>西安电子科技大学</FooterHan>Xidian University
              </Footer>
            </Slide>
            <MarginLine />
            <Selection $x={54}><Handle /></Selection>
            <Selection $x={1061}><Handle /></Selection>
            <VThumb />
            <HThumb />
          </Canvas>
          <BottomEdge />
        </Body>
      </Window>
      <Watermark>
        <Pinwheel />
        <WatermarkText>热夏</WatermarkText>
      </Watermark>
    </Desktop>
  );
}
